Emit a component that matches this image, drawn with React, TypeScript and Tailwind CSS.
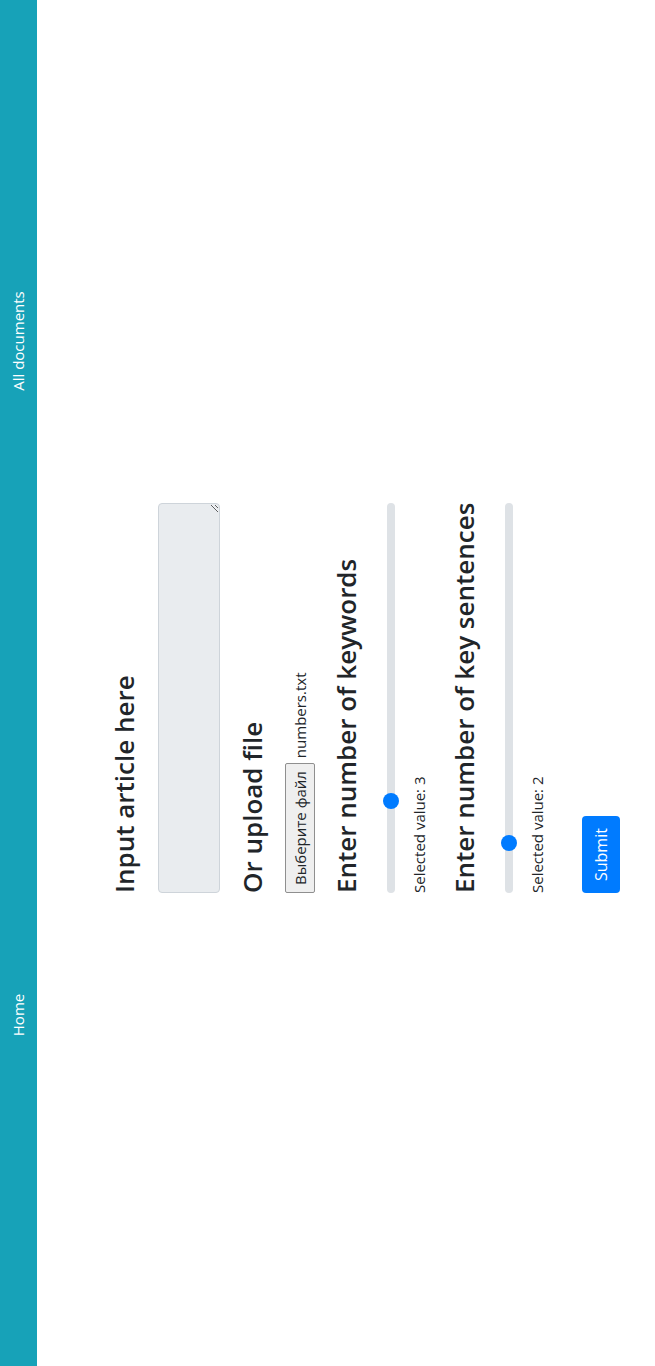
const font = { fontFamily: '"Open Sans", "Liberation Sans", sans-serif' }

function Slider({ thumbLeft }: { thumbLeft: string }) {
  return (
    <div className="relative flex items-center h-[22px] w-full">
      <div className="h-2 w-full rounded-full bg-[#dee2e6]" />
      <div className={`absolute top-[3px] w-4 h-4 rounded-full bg-[#007bff] ${thumbLeft}`} />
    </div>
  )
}

function Heading({ children, className = '' }: { children: React.ReactNode; className?: string }) {
  return (
    <h3 className={`text-[26px] leading-[34px] font-semibold text-[#212529] whitespace-nowrap ${className}`}>
      {children}
    </h3>
  )
}

export default function App() {
  return (
    <div className="relative w-[655px] h-[1366px] overflow-hidden bg-white" style={font}>
      {/* the page is shown turned a quarter to the left */}
      <div className="absolute left-0 top-0 w-[1366px] h-[655px] origin-top-left -rotate-90 translate-y-[1366px] bg-white">
        <nav className="flex items-center h-[37px] bg-[#17a2b8] text-white text-[15px]">
          <a className="w-[200px] ml-[251px] text-center">Home</a>
          <a className="w-[200px] ml-[474px] text-center">All documents</a>
        </nav>

        <form className="w-[390px] ml-[473px] flex flex-col text-[#212529]">
          <Heading className="mt-[70px]">Input article here</Heading>
          <textarea
            readOnly
            className="block mt-[17px] w-full h-[62px] bg-[#e9ecef] border border-[#ced4da] rounded"
          />

          <Heading className="mt-[15px]">Or upload file</Heading>
          <div className="flex items-center mt-[16px] h-[30px] text-[15px]">
            <span className="h-full flex items-center px-[7px] border border-[#8f8f8f] bg-[#efefef] rounded-[2px]">
              Выберите файл
            </span>
            <span className="ml-[5px]">numbers.txt</span>
          </div>

          <Heading className="mt-[14px]">Enter number of keywords</Heading>
          <div className="mt-[17px]">
            <Slider thumbLeft="left-[84px]" />
          </div>
          <p className="mt-[5px] text-[15px] leading-6">Selected value: 3</p>

          <Heading className="mt-[16px]">Enter number of key sentences</Heading>
          <div className="mt-[17px]">
            <Slider thumbLeft="left-[42px]" />
          </div>
          <p className="mt-[5px] text-[15px] leading-6">Selected value: 2</p>

          <div className="mt-[33px]">
            <button
              type="button"
              className="h-[38px] px-3 rounded bg-[#007bff] text-white text-[16px]"
            >
              Submit
            </button>
          </div>
        </form>
      </div>
    </div>
  )
}
